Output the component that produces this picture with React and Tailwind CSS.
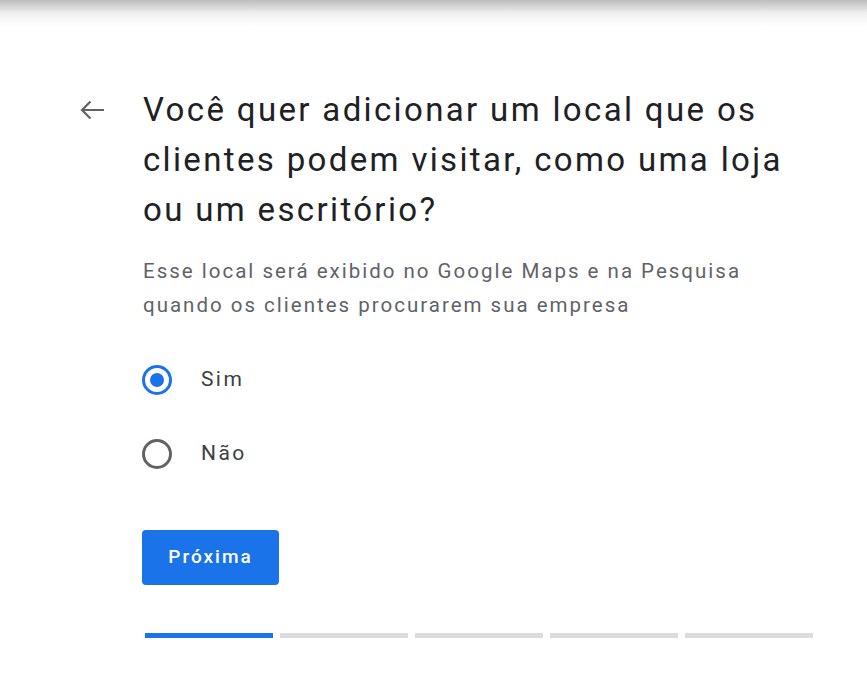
import React, { useState } from "react";

const steps = [true, false, false, false, false];

function Radio({ checked }) {
  return (
    <span
      className={
        "flex items-center justify-center w-[30px] h-[30px] rounded-full border-[3px] " +
        (checked ? "border-[#1a73e8]" : "border-[#5f6368]")
      }
    >
      {checked && <span className="w-[14px] h-[14px] rounded-full bg-[#1a73e8]" />}
    </span>
  );
}

export default function App() {
  const [choice, setChoice] = useState("sim");

  return (
    <div
      className="relative w-[867px] h-[697px] bg-white overflow-hidden"
      style={{ fontFamily: "Roboto, 'Liberation Sans', sans-serif" }}
    >
      <div className="h-[26px] bg-gradient-to-b from-[#bdbdbd] via-[#efefef] to-white" />
      <div className="flex pl-[79px] pt-[59px]">
        <div className="w-[64px] h-[50px] flex items-center">
          <svg width="26" height="22" viewBox="0 0 26 22" fill="none">
            <path d="M25 11H3M11.5 2.5 3 11l8.5 8.5" stroke="#5f6368" strokeWidth="2.2" />
          </svg>
        </div>
        <div className="flex flex-col">
          <h1 className="text-[33px] leading-[50px] text-[#202124] tracking-[2.35px] whitespace-nowrap">
            Você quer adicionar um local que os
            <br />
            clientes podem visitar, como uma loja
            <br />
            ou um escritório?
          </h1>
          <p className="mt-[19px] text-[20.5px] leading-[34px] text-[#5f6368] tracking-[2px] whitespace-nowrap">
            Esse local será exibido no Google Maps e na Pesquisa
            <br />
            quando os clientes procurarem sua empresa
          </p>
          <div className="flex flex-col mt-[21px] -ml-[1px]">
            <label className="flex items-center gap-[29px] h-[74px] cursor-pointer" onClick={() => setChoice("sim")}>
              <Radio checked={choice === "sim"} />
              <span className="text-[21px] text-[#3c4043] tracking-[2.4px]">Sim</span>
            </label>
            <label className="flex items-center gap-[29px] h-[74px] cursor-pointer" onClick={() => setChoice("nao")}>
              <Radio checked={choice === "nao"} />
              <span className="text-[21px] text-[#3c4043] tracking-[2.4px]">Não</span>
            </label>
          </div>
          <button className="mt-[39px] w-[137px] h-[55px] rounded-[4px] bg-[#1a73e8] text-white text-[19px] font-medium tracking-[2px] -ml-[1px]">
            Próxima
          </button>
          <div className="flex gap-[7px] mt-[48px] ml-[2px]">
            {steps.map((done, i) => (
              <span
                key={i}
                className={"w-[128px] h-[5px] " + (done ? "bg-[#1a73e8]" : "bg-[#dadce0]")}
              />
            ))}
          </div>
        </div>
      </div>
    </div>
  );
}
